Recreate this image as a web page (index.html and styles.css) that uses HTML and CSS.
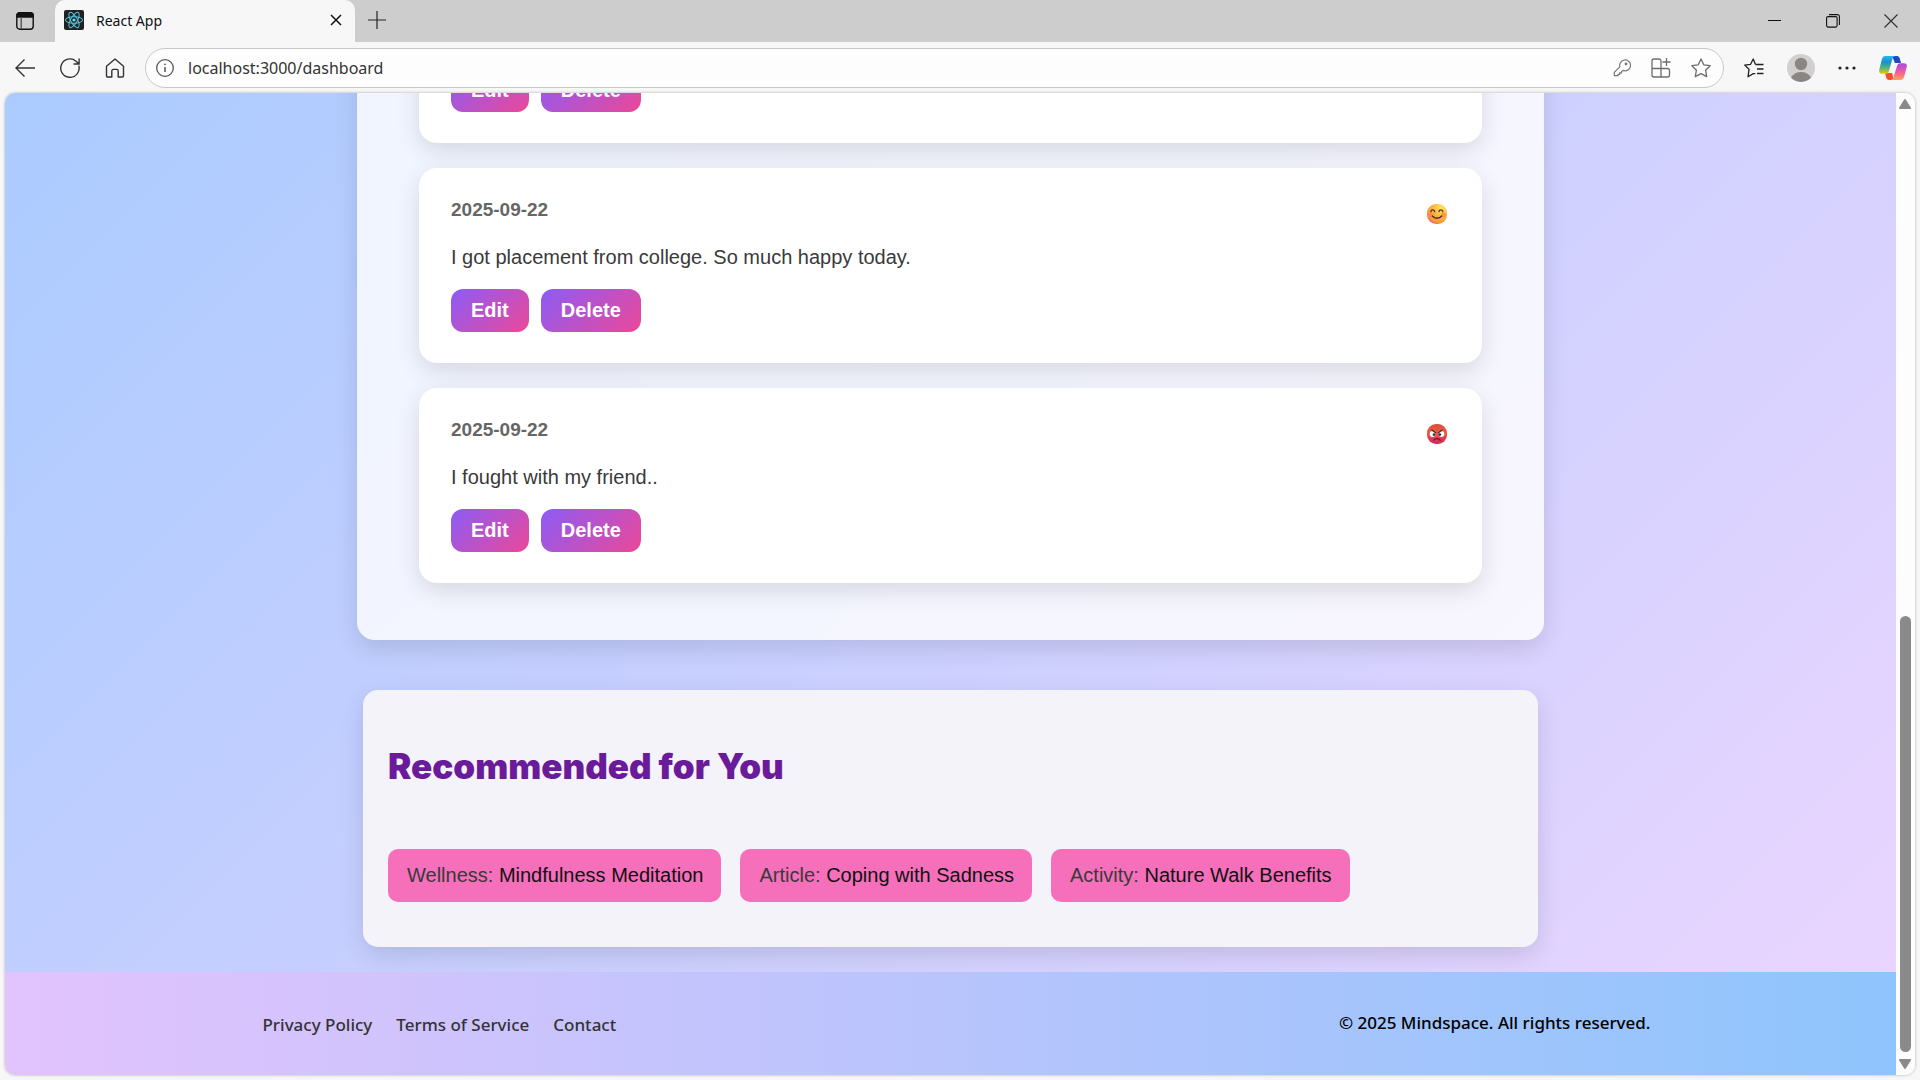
FILE: index.html
```html
<!DOCTYPE html>
<html lang="en">
<head>
<meta charset="utf-8">
<title>React App</title>
<link rel="stylesheet" href="styles.css">
</head>
<body>
<header class="browser">
  <div class="tab-bar">
    <button class="icon-btn tab-actions" aria-label="Tab actions">
      <svg width="18" height="18" viewBox="0 0 18 18" fill="none" stroke="#111" stroke-width="1.4"><rect x=".8" y=".8" width="16.400" height="16.400" rx="3"/><path d="M1 4V3a2 2 0 0 1 2-2h12a2 2 0 0 1 2 2v2H1z" fill="#111"/><path d="M5.200 5v12" stroke="#555"/></svg>
    </button>
    <div class="tab">
      <svg width="20" height="20" viewBox="0 0 20 20"><rect width="20" height="20" rx="2" fill="#222"/><g fill="none" stroke="#56c5dd" stroke-width="1"><ellipse cx="10" cy="10" rx="8.600" ry="3.300"/><ellipse cx="10" cy="10" rx="8.600" ry="3.300" transform="rotate(60 10 10)"/><ellipse cx="10" cy="10" rx="8.600" ry="3.300" transform="rotate(120 10 10)"/></g><circle cx="10" cy="10" r="1.600" fill="#61dafb"/></svg>
      <span class="tab-title">React App</span>
      <button class="icon-btn" aria-label="Close tab">
        <svg width="12" height="12" viewBox="0 0 12 12" stroke="#111" stroke-width="1.500"><path d="M1 1l10 10M11 1L1 11"/></svg>
      </button>
    </div>
    <button class="icon-btn new-tab" aria-label="New tab">
      <svg width="18" height="18" viewBox="0 0 18 18" stroke="#222" stroke-width="1.200"><path d="M9 0v18M0 9h18"/></svg>
    </button>
    <div class="window-controls">
      <button class="icon-btn" aria-label="Minimize"><svg width="14" height="14" viewBox="0 0 14 14" stroke="#111" stroke-width="1"><path d="M0 6.500h13"/></svg></button>
      <button class="icon-btn" aria-label="Restore"><svg width="14" height="14" viewBox="0 0 14 14" fill="none" stroke="#111" stroke-width="1.100"><rect x=".6" y="2.600" width="10.500" height="10.500" rx="1.500"/><path d="M3 .6h8.400a2 2 0 0 1 2 2V11"/></svg></button>
      <button class="icon-btn" aria-label="Close"><svg width="14" height="14" viewBox="0 0 14 14" stroke="#333" stroke-width="1.200"><path d="M.5.5l13 13M13.500.5l-13 13"/></svg></button>
    </div>
  </div>
  <div class="toolbar">
    <nav class="nav-buttons" aria-label="Browser navigation">
      <button class="icon-btn" aria-label="Back"><svg width="20" height="18" viewBox="0 0 20 18" fill="none" stroke="#333" stroke-width="1.400"><path d="M20 9H1M9.500.5L1 9l8.500 8.500"/></svg></button>
      <button class="icon-btn" aria-label="Refresh"><svg width="20" height="20" viewBox="0 0 20 20" fill="none" stroke="#333" stroke-width="1.400"><path d="M18.800 7.600A9.200 9.200 0 1 1 16 3.200L19 6M19.100.5V6h-5.600"/></svg></button>
      <button class="icon-btn" aria-label="Home"><svg width="20" height="20" viewBox="0 0 20 20" fill="none" stroke="#333" stroke-width="1.400" stroke-linejoin="round"><path d="M1.500 8.300L10 1l8.500 7.300v9.500a1.200 1.200 0 0 1-1.200 1.200h-4.100v-6a1.600 1.600 0 0 0-1.600-1.600H8.400a1.600 1.600 0 0 0-1.600 1.600v6H2.700a1.200 1.200 0 0 1-1.200-1.200z"/></svg></button>
    </nav>
    <div class="address">
      <svg width="18" height="18" viewBox="0 0 18 18" fill="none" stroke="#555" stroke-width="1.300"><circle cx="9" cy="9" r="8.300"/><path d="M9 8v5" stroke-width="1.500"/><circle cx="9" cy="5.400" r=".6" fill="#555" stroke-width=".6"/></svg>
      <input class="url" type="text" aria-label="Address" value="localhost:3000/dashboard">
      <div class="address-icons">
        <button class="icon-btn" aria-label="Passwords"><svg width="18" height="18" viewBox="0 0 18 18" fill="none" stroke="#767676" stroke-width="1.200" stroke-linejoin="round"><path d="M11.500 1a5.400 5.400 0 1 1-1.300 10.400L8.500 12.500v1.400H6.600v1.500H5v1.300H1.300v-3.300l5.500-5.600A5.500 5.500 0 0 1 11.500 1z"/><circle cx="13" cy="4.900" r=".8"/></svg></button>
        <button class="icon-btn" aria-label="Apps"><svg width="20" height="20" viewBox="0 0 20 20" fill="none" stroke="#6d6d6d" stroke-width="1.300"><path d="M10 10.500V3a2 2 0 0 0-2-2H3a2 2 0 0 0-2 2v14a2 2 0 0 0 2 2h13.500a2 2 0 0 0 2-2v-4.500a2 2 0 0 0-2-2H1M10 10.500V19M15.500 0v8M11.500 4h8"/></svg></button>
        <button class="icon-btn" aria-label="Favorite"><svg width="20" height="20" viewBox="0 0 20 20" fill="none" stroke="#6d6d6d" stroke-width="1.300" stroke-linejoin="round"><path d="M10 1l2.800 5.800 6.400.9-4.600 4.500 1.100 6.400L10 15.600l-5.700 3 1.100-6.400L.8 7.700l6.400-.9z"/></svg></button>
      </div>
    </div>
    <div class="toolbar-icons">
      <button class="icon-btn" aria-label="Favorites list"><svg width="20" height="20" viewBox="0 0 20 20" fill="none" stroke="#222" stroke-width="1.300" stroke-linejoin="round"><path d="M11.500 6.500L9.200 1 6.600 6.300l-5.900.8 4.300 4.200-1 7.500 5.300-3.200 2 0M11.500 6.500H19.500M13 11h6.500M13 15.500h6.500"/></svg></button>
      <button class="icon-btn" aria-label="Profile"><svg width="28" height="28" viewBox="0 0 28 28"><circle cx="14" cy="14" r="14" fill="#d2d0ce"/><circle cx="14" cy="10" r="6.200" fill="#8a8684"/><path d="M4 23.600C6 20 9.500 18 14 18s8 2 10 5.600A14 14 0 0 1 14 28 14 14 0 0 1 4 23.600z" fill="#8a8684"/></svg></button>
      <button class="icon-btn" aria-label="More"><svg width="18" height="4" viewBox="0 0 18 4" fill="#222"><circle cx="2" cy="2" r="1.600"/><circle cx="9" cy="2" r="1.600"/><circle cx="16" cy="2" r="1.600"/></svg></button>
      <button class="icon-btn" aria-label="Copilot"><svg width="28" height="26" viewBox="0 0 28 26">
        <defs>
          <linearGradient id="cpA" x1="0" y1="0" x2="0" y2="1"><stop offset="0" stop-color="#2ab4f0"/><stop offset=".35" stop-color="#1b8fd0"/><stop offset=".7" stop-color="#5fb96a"/><stop offset="1" stop-color="#f2c80f"/></linearGradient>
          <linearGradient id="cpB" x1="0" y1="0" x2="0" y2="1"><stop offset="0" stop-color="#a34ae8"/><stop offset=".5" stop-color="#ee5a9c"/><stop offset="1" stop-color="#ffa45e"/></linearGradient>
        </defs>
        <path d="M13 1h5c1.500 0 2.300 1 2.700 2.300L22 8h-6z" fill="#1b48c4"/>
        <path d="M15 25h-5c-1.500 0-2.300-1-2.700-2.300L6 18h7z" fill="#f0502e"/>
        <path d="M6.500 1h10c-2 .3-2.800 1.800-3.400 4L10 16c-.6 2-1.500 2.800-3.500 2.800H3.200C.6 18.800-.3 17 .3 14.500L2.800 4.500C3.400 2 4.500 1 6.500 1z" fill="url(#cpA)"/>
        <path d="M21.500 25h-10c2-.3 2.800-1.800 3.400-4L18 11c.6-2 1.500-2.800 3.500-2.800h3.300c2.600 0 3.500 1.300 2.900 3.800l-2.500 9.500c-.6 2.500-1.700 3.500-3.700 3.500z" fill="url(#cpB)"/>
      </svg></button>
    </div>
  </div>
</header>

<div class="viewport">
  <div class="page">
    <main class="main">
      <section class="panel" aria-label="Journal entries">
        <article class="entry">
          <div class="actions"><button class="btn">Edit</button><button class="btn">Delete</button></div>
        </article>
        <article class="entry">
          <div class="entry-head">
            <time class="date" datetime="2025-09-22">2025-09-22</time>
            <svg class="mood" viewBox="0 0 20 20" role="img" aria-label="Happy">
              <defs><radialGradient id="happy" cx=".7" cy=".2" r=".9"><stop offset="0" stop-color="#ffe65a"/><stop offset=".45" stop-color="#fdb640"/><stop offset=".8" stop-color="#f99a3c"/><stop offset="1" stop-color="#e8607a"/></radialGradient></defs>
              <rect width="20" height="20" rx="9" fill="url(#happy)"/>
              <circle cx="3.500" cy="11" r="2.400" fill="#fb7a5c" opacity=".6"/><circle cx="16.500" cy="11" r="2.400" fill="#fb7a5c" opacity=".6"/>
              <path d="M3.800 7.600c.4-2.400 3.400-2.400 3.900 0M11.900 7.600c.4-2.400 3.400-2.400 3.900 0M5.300 12c2.400 3 7 3 9.400 0" fill="none" stroke="#4d2b3a" stroke-width="1.300" stroke-linecap="round"/>
            </svg>
          </div>
          <p class="note">I got placement from college. So much happy today.</p>
          <div class="actions"><button class="btn">Edit</button><button class="btn">Delete</button></div>
        </article>
        <article class="entry">
          <div class="entry-head">
            <time class="date" datetime="2025-09-22">2025-09-22</time>
            <svg class="mood" viewBox="0 0 20 20" role="img" aria-label="Angry">
              <defs><linearGradient id="angry" x1="0" y1="0" x2="0" y2="1"><stop offset="0" stop-color="#d9503a"/><stop offset=".45" stop-color="#ec5a44"/><stop offset=".8" stop-color="#e52f50"/><stop offset="1" stop-color="#c8306e"/></linearGradient></defs>
              <rect width="20" height="20" rx="9" fill="url(#angry)"/>
              <circle cx="5.600" cy="10" r="2.900" fill="#fff"/><circle cx="14.400" cy="10" r="2.900" fill="#fff"/>
              <circle cx="7" cy="10.600" r="1.300" fill="#3b2030"/><circle cx="12.800" cy="10.600" r="1.300" fill="#3b2030"/>
              <path d="M5 6.200l3.700 2.600M15 6.200l-3.700 2.600M6.800 16.200c1.200-2.200 5.200-2.200 6.400 0" fill="none" stroke="#4a2033" stroke-width="1.200" stroke-linecap="round"/>
            </svg>
          </div>
          <p class="note">I fought with my friend..</p>
          <div class="actions"><button class="btn">Edit</button><button class="btn">Delete</button></div>
        </article>
      </section>

      <section class="recommended">
        <h2 class="rec-title">Recommended for You</h2>
        <ul class="chips">
          <li class="chip">Wellness: <a href="#mindfulness">Mindfulness Meditation</a></li>
          <li class="chip">Article: <a href="#coping">Coping with Sadness</a></li>
          <li class="chip">Activity: <a href="#nature">Nature Walk Benefits</a></li>
        </ul>
      </section>
    </main>
    <footer class="footer">
      <div class="footer-inner">
        <nav class="footer-links" aria-label="Footer"><a href="#privacy">Privacy Policy</a><a href="#terms">Terms of Service</a><a href="#contact">Contact</a></nav>
        <p class="copyright">© 2025 Mindspace. All rights reserved.</p>
      </div>
    </footer>
  </div>
  <div class="scrollbar" aria-hidden="true">
    <svg width="12" height="10" viewBox="0 0 12 10" fill="#8a8a8a"><path d="M5 .8a1.200 1.200 0 0 1 2 0l4.800 7.600c.4.800 0 1.600-.9 1.600H1.100c-.9 0-1.300-.8-.9-1.600z"/></svg>
    <div class="track"><div class="thumb"></div></div>
    <svg width="12" height="10" viewBox="0 0 12 10" fill="#8a8a8a"><path d="M5 9.200a1.200 1.200 0 0 0 2 0l4.800-7.600c.4-.8 0-1.600-.9-1.600H1.100C.2 0-.2.800.2 1.600z"/></svg>
  </div>
</div>
</body>
</html>
```
FILE: styles.css
```css
* { box-sizing: border-box; }

body {
  margin: 0;
  height: 100vh;
  display: flex;
  flex-direction: column;
  overflow: hidden;
  background: #f7f7f7;
  font-family: "Liberation Sans", Arial, sans-serif;
  font-size: 20px;
  color: #3a3a3a;
}

button { font: inherit; cursor: pointer; }

.icon-btn {
  display: flex;
  align-items: center;
  justify-content: center;
  padding: 0;
  border: 0;
  background: none;
}

/* Browser chrome */
.browser { flex: none; font-family: "Noto Sans", sans-serif; }

.tab-bar {
  display: flex;
  height: 42px;
  background: #cdcdcd;
}

.tab-actions {
  width: 55px;
  padding-right: 5px;
}

.tab {
  display: flex;
  align-items: center;
  width: 300px;
  padding: 0 13px 2px 9px;
  border-radius: 10px 10px 0 0;
  background: #f7f7f7;
}

.tab-title {
  flex: 1;
  padding-left: 12px;
  font-size: 14px;
  color: #111;
}

.new-tab { width: 44px; padding-bottom: 3px; }

.window-controls {
  display: flex;
  gap: 44px;
  margin-left: auto;
  padding-right: 22px;
}

.toolbar {
  display: flex;
  align-items: center;
  height: 51px;
  padding: 1px 13px 0 15px;
}

.nav-buttons { display: flex; gap: 25px; margin-right: 20px; }

.address {
  flex: 1;
  display: flex;
  align-items: center;
  height: 40px;
  padding: 0 12px 0 10px;
  border: 1px solid #c9c9c9;
  border-radius: 20px;
  background: #fdfdfd;
}

.url {
  flex: 1;
  padding: 0 0 0 14px;
  border: 0;
  outline: 0;
  background: none;
  font: 16px "Noto Sans", sans-serif;
  color: #333;
}

.address-icons { display: flex; gap: 20px; }

.toolbar-icons { display: flex; gap: 23px; margin-left: 20px; }

/* Scrolled page area */
.viewport {
  flex: 1;
  min-height: 0;
  display: flex;
  margin: 0 5px 5px;
  overflow: hidden;
  border-radius: 10px;
  box-shadow: 0 0 3px rgba(0, 0, 0, 0.3);
}

.page {
  flex: 1;
  display: flex;
  flex-direction: column;
}

.main {
  flex: 1;
  min-height: 0;
  display: flex;
  flex-direction: column;
  align-items: center;
  justify-content: flex-end;
  gap: 50px;
  padding-bottom: 25px;
  overflow: hidden;
  background: linear-gradient(135deg, #abcbff, #e9d5ff);
}

.panel {
  flex: none;
  display: flex;
  flex-direction: column;
  gap: 25px;
  width: 100%;
  max-width: 1187px;
  padding: 62px 62px 57px;
  border-radius: 18px;
  background: rgba(255, 255, 255, 0.8);
  box-shadow: 0 8px 25px rgba(0, 0, 0, 0.12);
}

.entry {
  padding: 31px 32px;
  border-radius: 18px;
  background: #fff;
  box-shadow: 0 8px 25px rgba(0, 0, 0, 0.12);
}

.entry-head {
  display: flex;
  justify-content: space-between;
  align-items: flex-start;
  height: 30px;
}

.date {
  font-size: 19px;
  line-height: 22px;
  font-weight: 700;
  color: #666;
}

.mood { width: 20px; height: 20px; margin: 5px 3px; }

.note { margin: 13px 0 17px; line-height: 30px; }

.actions { display: flex; gap: 12px; }

.btn {
  height: 43px;
  padding: 0 20px;
  border: 0;
  border-radius: 12px;
  background: linear-gradient(135deg, #8b5cf6, #ec4899);
  font-weight: 700;
  color: #fff;
}

.recommended {
  flex: none;
  width: 100%;
  max-width: 1175px;
  padding: 54px 25px 45px;
  border-radius: 15px;
  background: #f4f3f9;
  box-shadow: 0 8px 25px rgba(0, 0, 0, 0.12);
}

.rec-title {
  margin: 0 0 61px;
  font-family: Inter, "Liberation Sans", sans-serif;
  font-size: 35px;
  line-height: 44px;
  font-weight: 900;
  color: #6a1b9a;
}

.chips {
  display: flex;
  gap: 19px;
  margin: 0;
  padding: 0;
  list-style: none;
}

.chip {
  padding: 12px 18px 12px 19px;
  border-radius: 10px;
  background: #f56fbb;
  line-height: 29px;
}

.chip a { color: #111; text-decoration: none; }

.footer {
  flex: none;
  display: flex;
  justify-content: center;
  align-items: center;
  height: 103px;
  background: linear-gradient(90deg, #e2c3fd, #8ec5fc);
  font-family: "Noto Sans", sans-serif;
  font-size: 17px;
  font-weight: 500;
}

.footer-inner {
  display: flex;
  justify-content: space-between;
  width: 100%;
  max-width: 1400px;
  padding-left: 12px;
}

.footer-links { display: flex; gap: 24px; padding-top: 2px; }
.footer-links a { color: #333; text-decoration: none; }
.copyright { margin: 0; color: #000; }

.scrollbar {
  display: flex;
  flex-direction: column;
  align-items: center;
  width: 19px;
  padding: 6px 1px 6px 0;
  background: #fdfdfd;
}

.track {
  flex: 1;
  display: flex;
  flex-direction: column;
  justify-content: flex-end;
  padding-bottom: 7px;
}

.thumb { width: 11px; height: 436px; border-radius: 6px; background: #8a8a8a; }
```
